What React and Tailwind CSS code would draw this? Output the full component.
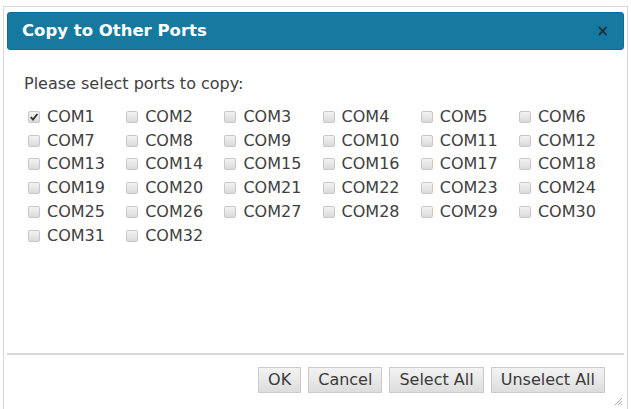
import React, { useState } from 'react';

const ports = Array.from({ length: 32 }, (_, i) => `COM${i + 1}`);

const Checkbox = ({ checked }) => (
    <span className="w-[12px] h-[12px] rounded-[2px] border border-[#c8c8c8] bg-gradient-to-b from-[#f3f3f3] to-[#dadada] flex items-center justify-center shrink-0">
        {checked && (
            <svg width="10" height="10" viewBox="0 0 10 10">
                <path d="M1.8 5.2 L4 7.6 L8.4 2" fill="none" stroke="#333" strokeWidth="1.8" />
            </svg>
        )}
    </span>
);

const Button = ({ children }) => (
    <button className="h-[26px] px-[9px] border border-[#cbcbcb] bg-gradient-to-b from-[#f3f3f3] to-[#dddddd] text-[16px] text-[#3a3a3a] leading-none">
        {children}
    </button>
);

const App = () => {
    const [selected] = useState(['COM1']);

    return (
        <div className="w-[631px] h-[409px] bg-white pt-[6px] px-[3px] font-['DejaVu_Sans',sans-serif] overflow-hidden">
            <div className="h-[410px] border-l border-t border-r border-[#d9d9d9] px-[3px] pt-[5px] flex flex-col">

                {/* Title bar */}
                <div className="h-[38px] rounded-[3px] bg-[#167aa0] border border-[#106c90] flex items-center justify-between pl-[14px] pr-[14px]">
                    <span className="text-white font-bold text-[16.5px] leading-none">Copy to Other Ports</span>
                    <span className="text-[#1b3140] font-bold text-[15px] leading-none">×</span>
                </div>

                {/* Body */}
                <div className="h-[303px] pl-[17px] pt-[25px] text-[16px] text-[#404040]">
                    <p className="leading-[18px] mb-[12px]">Please select ports to copy:</p>
                    <div className="grid grid-cols-[repeat(6,98.2px)] auto-rows-[23.8px]">
                        {ports.map(p => (
                            <label key={p} className="flex items-center gap-[7px] pl-[4px]">
                                <Checkbox checked={selected.includes(p)} />
                                <span className="leading-none">{p}</span>
                            </label>
                        ))}
                    </div>
                </div>

                {/* Footer */}
                <div className="border-t-2 border-[#d6d6d6] flex justify-end gap-[7px] pt-[12px] pr-[19px] relative h-[60px]">
                    <Button>OK</Button>
                    <Button>Cancel</Button>
                    <Button>Select All</Button>
                    <Button>Unselect All</Button>
                    <svg className="absolute right-[1px] top-[41px]" width="10" height="10" viewBox="0 0 10 10">
                        <path d="M9 2 L2 9 M9 5 L5 9 M9 8 L8 9" stroke="#a8a8a8" strokeWidth="1" />
                    </svg>
                </div>
            </div>
        </div>
    );
};

export default App;
